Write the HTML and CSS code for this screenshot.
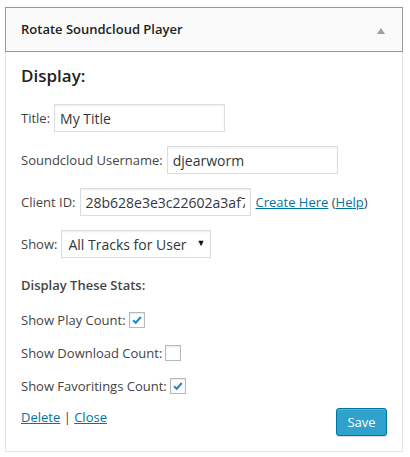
FILE: index.html
```html
<!DOCTYPE html>
<html>
<head>
<meta charset="utf-8">
<link rel="stylesheet" href="styles.css">
</head>
<body>
<div class="widget">
  <div class="widget-top">
    <h3 class="widget-title">Rotate Soundcloud Player</h3>
    <span class="toggle"></span>
  </div>
  <div class="widget-inside">
    <h3 class="section">Display:</h3>
    <div class="row"><label>Title:</label><input class="text" type="text" value="My Title"></div>
    <div class="row"><label>Soundcloud Username:</label><input class="text" type="text" value="djearworm"></div>
    <div class="row"><label>Client ID:</label><input class="text" type="text" value="28b628e3e3c22602a3af7c0d91b4e5f2"><span class="links"><a href="#">Create Here</a> (<a href="#">Help</a>)</span></div>
    <div class="row"><label>Show:</label><span class="select-wrap"><select class="select"><option>All Tracks for User</option></select><span class="arrow">▼</span></span></div>
    <div class="stats-title">Display These Stats:</div>
    <div class="check-row"><label>Show Play Count:</label><span class="cb"><svg viewBox="0 0 16 16" width="14" height="14"><path d="M3.5 8.2 L6.6 11.1 L12.4 4.6" fill="none" stroke="#1e8cbe" stroke-width="2.4"/></svg></span></div>
    <div class="check-row"><label>Show Download Count:</label><span class="cb"></span></div>
    <div class="check-row"><label>Show Favoritings Count:</label><span class="cb"><svg viewBox="0 0 16 16" width="14" height="14"><path d="M3.5 8.2 L6.6 11.1 L12.4 4.6" fill="none" stroke="#1e8cbe" stroke-width="2.4"/></svg></span></div>
    <div class="actions">
      <div class="action-links"><a href="#">Delete</a> | <a href="#">Close</a></div>
      <button class="save">Save</button>
    </div>
  </div>
</div>
</body>
</html>
```
FILE: styles.css
```css
html, body {
  margin: 0;
  padding: 0;
  background: #fff;
}
body {
  font-family: "Open Sans", "Liberation Sans", sans-serif;
  font-size: 13px;
  color: #444;
}
.widget {
  margin: 7px 0 0 5px;
  width: 398px;
  box-sizing: border-box;
}
.widget-top {
  height: 45px;
  box-sizing: border-box;
  border: 1px solid #999;
  background: #fafafa;
  display: flex;
  align-items: center;
  justify-content: space-between;
  padding: 0 17px 0 15px;
}
.widget-title {
  margin: 0;
  font-size: 13px;
  font-weight: 600;
  color: #222;
  line-height: 1;
}
.toggle {
  width: 0;
  height: 0;
  border-left: 4px solid transparent;
  border-right: 4px solid transparent;
  border-bottom: 6px solid #a0a0a0;
  margin-top: 2px;
}
.widget-inside {
  border: 1px solid #e5e5e5;
  border-top: none;
  padding: 12px 15px 15px;
  display: flex;
  flex-direction: column;
}
.section {
  margin: 0 0 16px;
  font-size: 17px;
  font-weight: 600;
  line-height: 24px;
  color: #222;
}
.row {
  display: flex;
  align-items: center;
  height: 28px;
  margin-bottom: 14px;
  white-space: nowrap;
}
.row label {
  margin-right: 4px;
}
.text {
  width: 171px;
  height: 28px;
  box-sizing: border-box;
  border: 1px solid #ddd;
  box-shadow: inset 0 1px 2px rgba(0,0,0,.07);
  padding: 0 5px;
  font-family: "Open Sans", "Liberation Sans", sans-serif;
  font-size: 14px;
  color: #32373c;
  background: #fff;
  outline: none;
  margin: 0;
}
.links {
  margin-left: 5px;
}
a {
  color: #0074a2;
  text-decoration: underline;
}
.select-wrap {
  position: relative;
  display: inline-block;
}
.select {
  -webkit-appearance: none;
  appearance: none;
  width: 150px;
  height: 28px;
  box-sizing: border-box;
  border: 1px solid #ddd;
  box-shadow: inset 0 1px 2px rgba(0,0,0,.07);
  background: #fff;
  padding: 0 6px;
  font-family: "Open Sans", "Liberation Sans", sans-serif;
  font-size: 14px;
  color: #32373c;
  border-radius: 0;
  margin: 0;
  display: block;
}
.arrow {
  position: absolute;
  right: 6px;
  top: 7px;
  font-size: 9px;
  color: #111;
  line-height: 12px;
  pointer-events: none;
}
.stats-title {
  font-weight: 600;
  line-height: 20px;
  margin-top: 3px;
  margin-bottom: 15px;
}
.check-row {
  display: flex;
  align-items: center;
  height: 20px;
  margin-bottom: 13px;
  white-space: nowrap;
}
.check-row label {
  margin-right: 3px;
}
.cb {
  width: 16px;
  height: 16px;
  box-sizing: border-box;
  border: 1px solid #b4b9be;
  background: #fff;
  box-shadow: inset 0 1px 2px rgba(0,0,0,.1);
  display: flex;
  align-items: center;
  justify-content: center;
}
.actions {
  display: flex;
  justify-content: space-between;
  align-items: flex-start;
  margin-top: -2px;
}
.action-links {
  line-height: 20px;
}
.save {
  margin-top: 1px;
  width: 51px;
  height: 28px;
  box-sizing: border-box;
  background: #2ea2cc;
  border: 1px solid #0074a2;
  border-radius: 3px;
  box-shadow: inset 0 1px 0 rgba(120,200,230,.5), 0 1px 0 rgba(0,0,0,.15);
  color: #fff;
  font-family: "Open Sans", "Liberation Sans", sans-serif;
  font-size: 13px;
  padding: 0;
}
```
